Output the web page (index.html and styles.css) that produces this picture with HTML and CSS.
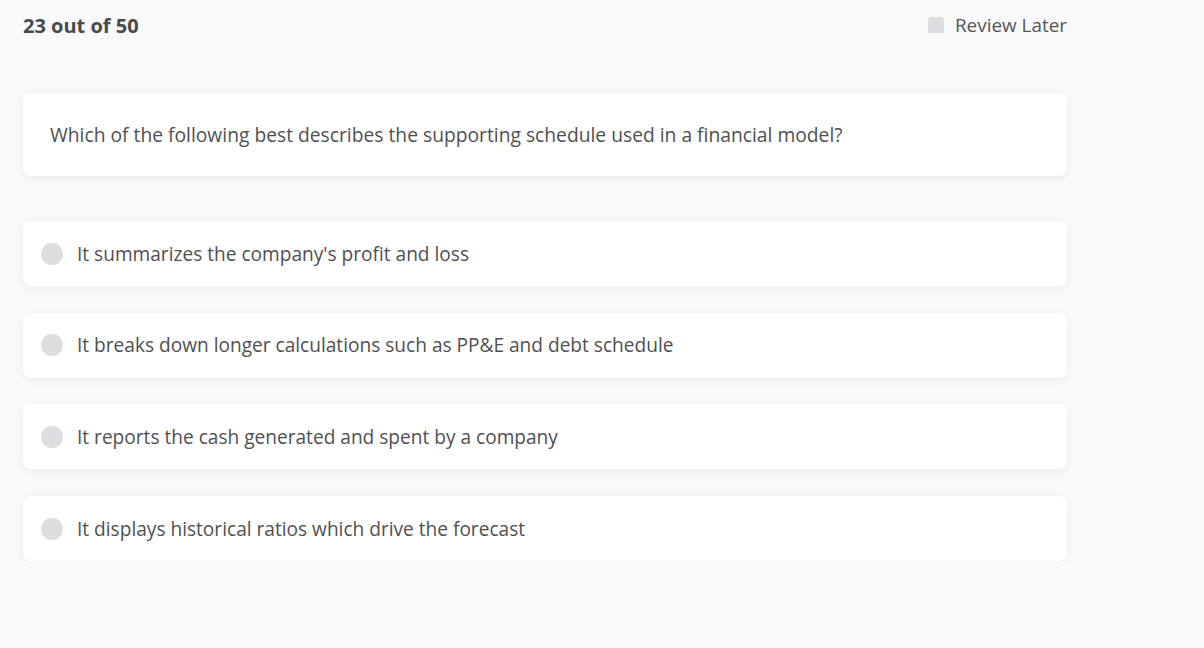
FILE: index.html
```html
<!DOCTYPE html>
<html>
<head>
<meta charset="utf-8">
<link rel="stylesheet" href="styles.css">
</head>
<body>
<div class="wrap">
  <div class="header">
    <div class="count">23 out of 50</div>
    <label class="review"><span class="box"></span><span class="review-text">Review Later</span></label>
  </div>
  <div class="card question">Which of the following best describes the supporting schedule used in a financial model?</div>
  <div class="options">
    <div class="card option"><span class="radio"></span><span class="opt-text">It summarizes the company's profit and loss</span></div>
    <div class="card option"><span class="radio"></span><span class="opt-text">It breaks down longer calculations such as PP&amp;E and debt schedule</span></div>
    <div class="card option"><span class="radio"></span><span class="opt-text">It reports the cash generated and spent by a company</span></div>
    <div class="card option"><span class="radio"></span><span class="opt-text">It displays historical ratios which drive the forecast</span></div>
  </div>
</div>
</body>
</html>
```
FILE: styles.css
```css
html, body {
  margin: 0;
  padding: 0;
  background: #f8f9fa;
  font-family: "Open Sans", "Noto Sans", sans-serif;
  color: #505050;
}
.wrap {
  width: 1044px;
  margin-left: 23px;
}
.header {
  display: flex;
  justify-content: space-between;
  align-items: center;
  height: 50px;
}
.count {
  font-weight: 700;
  font-size: 20px;
  color: #4a4a4a;
}
.review {
  display: flex;
  align-items: center;
  gap: 11px;
  font-size: 18.9px;
  color: #555;
}
.box {
  width: 16px;
  height: 16px;
  background: #dcdde0;
  border-radius: 2px;
}
.card {
  background: #fff;
  border-radius: 8px;
  box-shadow: 0 2px 8px rgba(0, 0, 0, 0.06);
}
.question {
  margin-top: 43px;
  height: 83px;
  box-sizing: border-box;
  display: flex;
  align-items: center;
  padding-left: 27px;
  font-size: 19.25px;
  color: #505050;
}
.options {
  margin-top: 45px;
  display: flex;
  flex-direction: column;
  gap: 26.7px;
}
.option {
  height: 65px;
  display: flex;
  align-items: center;
  padding-left: 18px;
  font-size: 19.1px;
}
.radio {
  width: 22px;
  height: 22px;
  border-radius: 50%;
  background: #dcdde0;
  margin-right: 14px;
  flex: none;
}
```
